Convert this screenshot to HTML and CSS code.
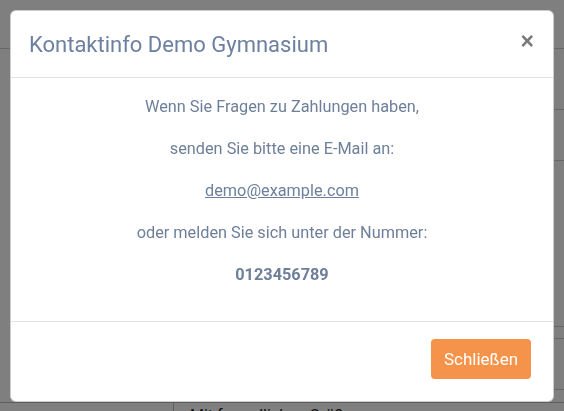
FILE: index.html
```html
<!DOCTYPE html>
<html lang="de">
<head>
  <meta charset="UTF-8">
  <meta name="viewport" content="width=device-width, initial-scale=1.0">
  <title>Kontaktinfo</title>
  <link rel="stylesheet" href="styles.css">
</head>
<body>
  <div class="page">
    <div class="page-row row-1"></div>
    <div class="page-row row-2"></div>
    <div class="page-row row-3"></div>
    <div class="page-row row-4"></div>
    <div class="page-row row-5"></div>
    <div class="page-row row-6"></div>
    <div class="page-row row-7"></div>
    <div class="page-bottom">
      <div class="page-side"></div>
      <div class="page-main">Mit freundlichen Grüßen</div>
    </div>
  </div>

  <div class="backdrop"></div>

  <div class="modal">
    <div class="modal-header">
      <h5 class="modal-title">Kontaktinfo Demo Gymnasium</h5>
      <button class="close" type="button">&times;</button>
    </div>
    <div class="modal-body">
      <p>Wenn Sie Fragen zu Zahlungen haben,</p>
      <p>senden Sie bitte eine E-Mail an:</p>
      <p><a href="mailto:demo@example.com">demo@example.com</a></p>
      <p>oder melden Sie sich unter der Nummer:</p>
      <p><strong>0123456789</strong></p>
    </div>
    <div class="modal-footer">
      <button class="btn-close" type="button">Schließen</button>
    </div>
  </div>
</body>
</html>
```

FILE: styles.css
```css
html, body {
  margin: 0;
  padding: 0;
  height: 100%;
}
body {
  font-family: Roboto, "Liberation Sans", sans-serif;
  background: #fff;
  overflow: hidden;
}
.page {
  height: 100%;
  display: flex;
  flex-direction: column;
}
.page-row {
  border-bottom: 1px solid #ccc;
  flex: none;
}
.row-1 { height: 48px; }
.row-2 { height: 60px; margin-left: 24px; }
.row-3 { height: 50px; margin-left: 24px; }
.row-4 { height: 165px; margin-left: 24px; }
.row-5 { height: 11px; margin-left: 24px; }
.row-6 { height: 50px; margin-left: 24px; }
.row-7 { height: 12px; margin-left: 24px; border-bottom: 0; }
.page-bottom {
  flex: 1;
  display: flex;
  border-top: 1px solid #bbb;
}
.page-side {
  width: 173px;
  border-right: 1px solid #bbb;
}
.page-main {
  padding: 3px 16px;
  font-size: 16px;
  color: #222;
}
.backdrop {
  position: fixed;
  inset: 0;
  background: rgba(0, 0, 0, 0.5);
}
.modal {
  position: fixed;
  top: 10px;
  left: 10px;
  width: 544px;
  height: 392px;
  box-sizing: border-box;
  background: #fff;
  border: 1px solid rgba(0, 0, 0, 0.2);
  border-radius: 6px;
  display: flex;
  flex-direction: column;
  color: #6e7f99;
}
.modal-header {
  display: flex;
  align-items: center;
  justify-content: space-between;
  height: 66px;
  padding: 0 18px;
  border-bottom: 1px solid #e2e2e2;
}
.modal-title {
  margin: 0;
  font-size: 22px;
  font-weight: 400;
  color: #6c80a0;
}
.close {
  background: none;
  border: 0;
  padding: 0;
  font-size: 23px;
  font-weight: 700;
  line-height: 1;
  color: #7a7a7a;
  margin-top: -6px;
  margin-right: 1px;
}
.modal-body {
  flex: 1;
  padding: 16px;
  text-align: center;
  font-size: 16.3px;
  line-height: 26px;
}
.modal-body p {
  margin: 0 0 16px;
}
.modal-body a {
  color: #6c7f9b;
}
.modal-body strong {
  font-weight: 700;
}
.modal-footer {
  display: flex;
  justify-content: flex-end;
  padding: 17px 22px 22px;
  border-top: 1px solid #e2e2e2;
}
.btn-close {
  width: 100px;
  height: 40px;
  border: 0;
  border-radius: 4px;
  background: #f6934a;
  color: #fff;
  font-family: Roboto, "Liberation Sans", sans-serif;
  font-size: 17px;
}
```
